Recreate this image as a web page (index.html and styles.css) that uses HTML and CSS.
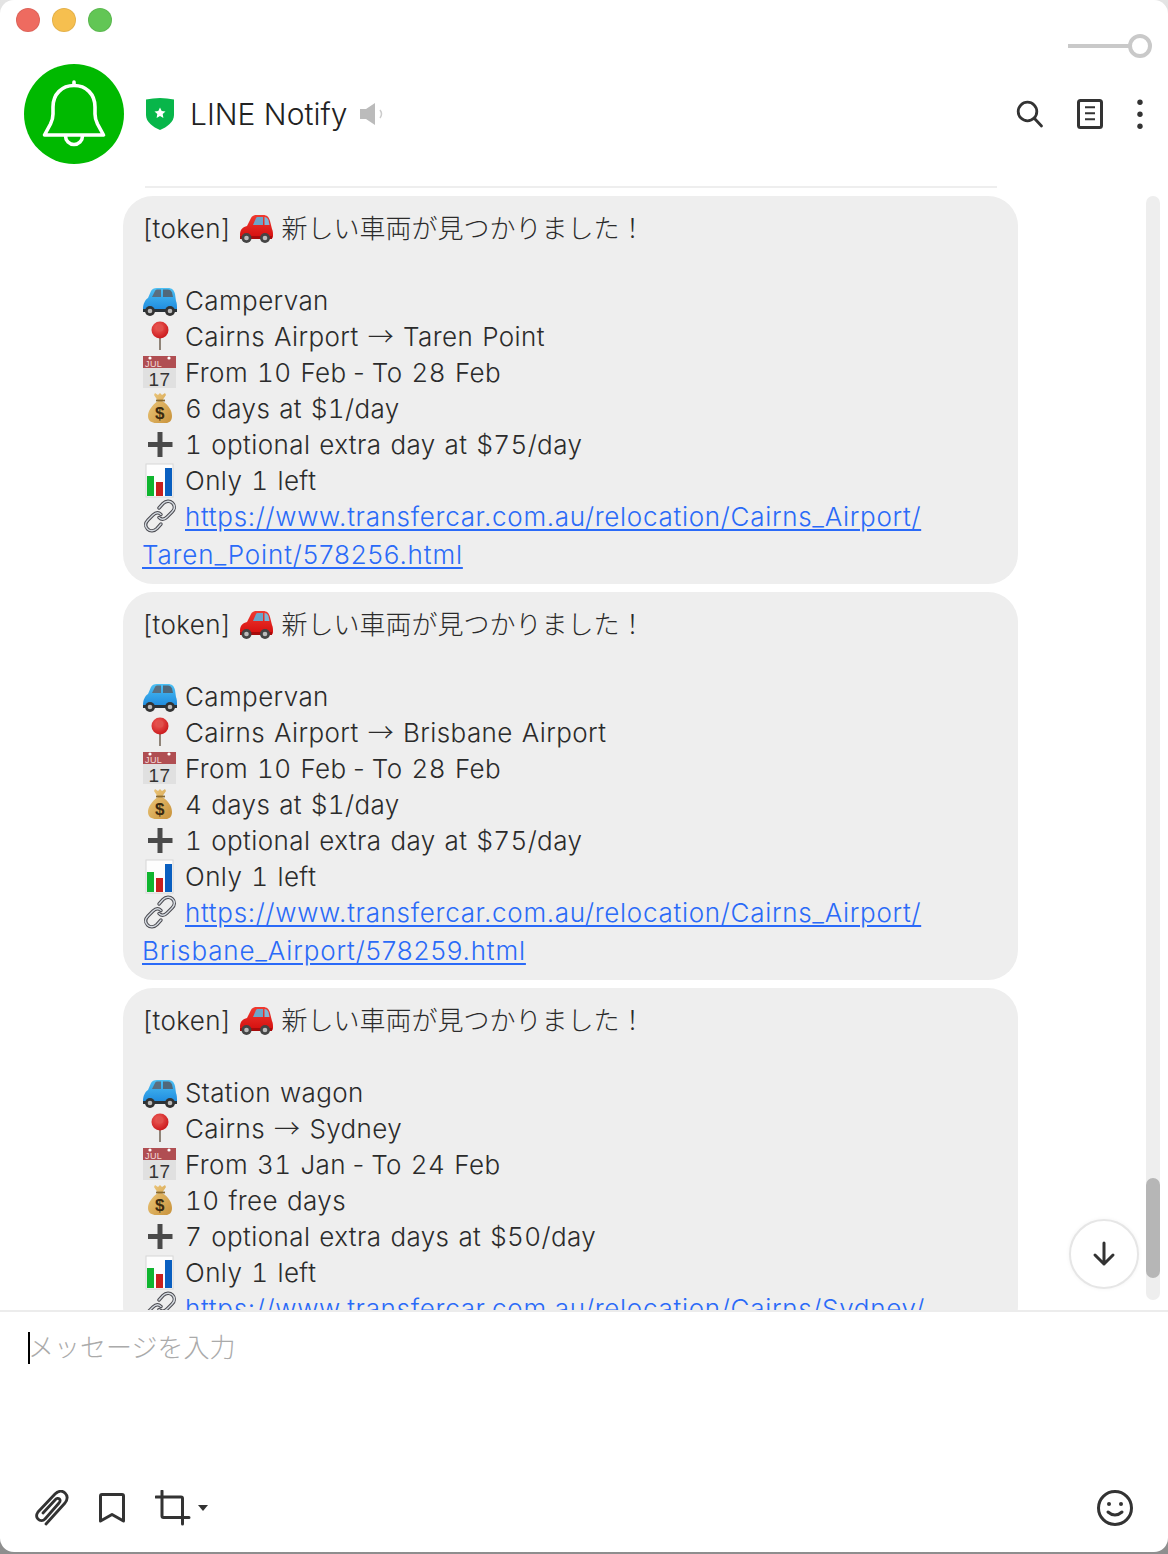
FILE: index.html
```html
<!DOCTYPE html>
<html lang="ja">
<head>
<meta charset="utf-8">
<title>LINE Notify</title>
<link rel="stylesheet" href="styles.css">
</head>
<body>
<svg class="defs" width="0" height="0" aria-hidden="true">
  <defs>
    <linearGradient id="redBody" x1="0" y1="0" x2="0" y2="1"><stop offset="0" stop-color="#f03a30"/><stop offset="1" stop-color="#d30d0d"/></linearGradient>
    <linearGradient id="blueBody" x1="0" y1="0" x2="0" y2="1"><stop offset="0" stop-color="#4cc0f4"/><stop offset="1" stop-color="#1b86dc"/></linearGradient>
    <linearGradient id="bag" x1="0" y1="0" x2="1" y2="1"><stop offset="0" stop-color="#efcb80"/><stop offset="1" stop-color="#c8923a"/></linearGradient>
    <radialGradient id="pinHead" cx=".4" cy=".35" r=".7"><stop offset="0" stop-color="#f0605a"/><stop offset="1" stop-color="#c8161a"/></radialGradient>
    <symbol id="e-red" viewBox="0 0 36 36">
      <path d="M2 25c0-6 3-8 7-9l4-8c1-2 3-3 6-3h6c4 0 6 2 7 6l2 8c1 2 1 4 1 7 0 2-1 3-3 3H4c-1 0-2-2-2-4z" fill="url(#redBody)"/>
      <path d="M15 15l3-7c.5-1 1-1 2-1h5v8z" fill="#6ba6c9"/><path d="M26.500 7c2 0 3 1 4 3l1 5h-5z" fill="#7fb6d6"/>
      <path d="M2 26h32v3H2z" fill="#a70b0b"/>
      <circle cx="8.500" cy="28" r="5" fill="#444"/><circle cx="8.500" cy="28" r="2.300" fill="#bbb"/>
      <circle cx="27" cy="28" r="5" fill="#444"/><circle cx="27" cy="28" r="2.300" fill="#bbb"/>
    </symbol>
    <symbol id="e-blue" viewBox="0 0 36 36">
      <path d="M1 27c0-5 2-9 5-11l3-7c1-2 3-3 6-3h11c4 0 6 2 7 6l1 7c1 2 1 5 1 8 0 2-1 3-3 3H3c-1 0-2-1-2-3z" fill="url(#blueBody)"/>
      <path d="M10 15l3-6c.5-1 1-1.500 3-1.500h3V15z" fill="#5a6f80"/><path d="M21 7.500h5c2 0 3 1 4 3l1 4.500H21z" fill="#50687a"/>
      <path d="M1 27h34v3H1z" fill="#2a3238"/>
      <circle cx="8" cy="29" r="5" fill="#333"/><circle cx="8" cy="29" r="2.300" fill="#bbb"/>
      <circle cx="28" cy="29" r="5" fill="#333"/><circle cx="28" cy="29" r="2.300" fill="#bbb"/>
    </symbol>
    <symbol id="e-pin" viewBox="0 0 36 36">
      <rect x="17" y="18" width="2" height="14" fill="#8f8478"/>
      <circle cx="18" cy="12" r="8.500" fill="url(#pinHead)"/>
      <circle cx="18" cy="10" r="3.500" fill="#e0504c"/>
    </symbol>
    <symbol id="e-cal" viewBox="0 0 36 36">
      <rect x="1" y="2" width="33" height="32" fill="#e0e0e0"/>
      <rect x="1" y="2" width="33" height="12" fill="#b04e52"/>
      <circle cx="8" cy="4" r="1.600" fill="#fff"/><circle cx="27" cy="4" r="1.600" fill="#fff"/>
      <text x="3" y="12.500" class="cal-month">JUL</text>
      <text x="17.500" y="31.500" class="cal-day">17</text>
    </symbol>
    <symbol id="e-bag" viewBox="0 0 36 36">
      <path d="M13 3l3 2 2-2 2 2 3-2 1 2-4 6c7 4 10 10 10 15 0 5-3 7-6 7H14c-4 0-8-2-8-7 0-5 4-11 10-15L12 5z" fill="url(#bag)"/>
      <path d="M14 10.500h9" stroke="#8a6a30" stroke-width="1.800"/>
      <text x="18" y="29" class="bag-sign">$</text>
    </symbol>
    <symbol id="e-plus" viewBox="0 0 36 36">
      <path d="M15.500 6h5v10h10v5h-10v10h-5V21H6v-5h9.500z" fill="#4a4a4a"/>
    </symbol>
    <symbol id="e-chart" viewBox="0 0 36 36">
      <rect x="4" y="2" width="27" height="33" fill="#fdfdfd" stroke="#d6d6d6"/>
      <rect x="5" y="14" width="7" height="20" fill="#0fb52f"/>
      <rect x="14" y="20" width="7" height="14" fill="#c8201e"/>
      <rect x="23" y="6" width="7" height="28" fill="#0a5fc0"/>
    </symbol>
    <symbol id="e-link" viewBox="0 0 36 36">
      <g fill="none" stroke-linecap="round">
        <path d="M17 10l4-4.500c3-3 7-3 9.500-.5s2.500 6-.5 9l-5 5c-3 3-6 2.500-8 .5" stroke="#4a4a50" stroke-width="3.400"/>
        <path d="M17 10l4-4.500c3-3 7-3 9.500-.5s2.500 6-.5 9l-5 5c-3 3-6 2.500-8 .5" stroke="#d5dae0" stroke-width="1.400"/>
        <path d="M19 26l-4 4.500c-3 3-7 3-9.500.5S3 25 6 22l5-5c3-3 6-2.500 8-.5" stroke="#4a4a50" stroke-width="3.400"/>
        <path d="M19 26l-4 4.500c-3 3-7 3-9.500.5S3 25 6 22l5-5c3-3 6-2.500 8-.5" stroke="#d5dae0" stroke-width="1.400"/>
      </g>
    </symbol>
  </defs>
</svg>

<div class="window">
  <div class="titlebar">
    <div class="lights">
      <span class="light light-red"></span>
      <span class="light light-yellow"></span>
      <span class="light light-green"></span>
    </div>
    <div class="slider"><span class="slider-track"></span><span class="slider-knob"></span></div>
  </div>

  <header class="chat-header">
    <div class="avatar">
      <svg viewBox="0 0 100 100" width="100" height="100" fill="none" stroke="#fff" stroke-width="3.600" stroke-linejoin="round" stroke-linecap="round">
        <path d="M50 18v3"/>
        <path d="M20.500 71l6-11q2.500-5 2.500-10v-7c0-13 9-21.500 21-21.500S71 30 71 43v7q0 5 2.500 10l6 11z"/>
        <path d="M41.500 72a8.500 8.500 0 0 0 17 0"/>
      </svg>
    </div>
    <svg class="shield" viewBox="0 0 28 32" width="28" height="32">
      <path d="M0 1.500Q14-1.500 28 1.500V17C28 24 21 29 14 32 7 29 0 24 0 17z" fill="#08b64a"/>
      <path d="M14 9.500l1.700 3.500 3.800.5-2.800 2.600.7 3.800-3.400-1.900-3.400 1.900.7-3.800-2.800-2.600 3.800-.5z" fill="#fff"/>
    </svg>
    <h1 class="chat-title">LINE Notify</h1>
    <svg class="mute" viewBox="0 0 24 24" width="24" height="24">
      <path d="M0 7h6l9-6v22l-9-6H0z" fill="#bbb"/>
      <path d="M20 8q3 4 0 8" fill="none" stroke="#ccc" stroke-width="1.500"/>
    </svg>
    <div class="header-actions">
      <svg viewBox="0 0 30 30" width="30" height="30" fill="none" stroke="#333" stroke-width="2.800" stroke-linecap="round">
        <circle cx="11.500" cy="12.500" r="9.300"/><path d="M18.500 19.500l7 7.500"/>
      </svg>
      <svg viewBox="0 0 30 30" width="30" height="30" fill="none" stroke="#333" stroke-width="3" stroke-linejoin="round">
        <rect x="2.500" y="1.500" width="23" height="27" rx="2"/>
        <path d="M9 8.300h10M9 14.300h10M9 20.300h10" stroke-width="2"/>
      </svg>
      <svg class="more" viewBox="0 0 8 30" width="8" height="30" fill="#333">
        <circle cx="4" cy="3.300" r="2.700"/><circle cx="4" cy="15.300" r="2.700"/><circle cx="4" cy="27.300" r="2.700"/>
      </svg>
    </div>
  </header>

  <main class="chat-body">
    <div class="messages">
      <div class="date-rule"></div>

      <article class="bubble">
        <div class="line"><span>[token]</span><svg class="emoji emoji-inline"><use href="#e-red"/></svg><span class="cjk">新しい車両が見つかりました！</span></div>
        <div class="line"></div>
        <div class="line"><svg class="emoji"><use href="#e-blue"/></svg><span>Campervan</span></div>
        <div class="line"><svg class="emoji"><use href="#e-pin"/></svg><span>Cairns Airport <span class="arrow">→</span> Taren Point</span></div>
        <div class="line"><svg class="emoji"><use href="#e-cal"/></svg><span>From 10 Feb<span class="dash"> - </span>To 28 Feb</span></div>
        <div class="line"><svg class="emoji"><use href="#e-bag"/></svg><span>6 days at $1/day</span></div>
        <div class="line"><svg class="emoji"><use href="#e-plus"/></svg><span>1 optional extra day at $75/day</span></div>
        <div class="line"><svg class="emoji"><use href="#e-chart"/></svg><span>Only 1 left</span></div>
        <div class="line"><svg class="emoji"><use href="#e-link"/></svg><a class="link" href="#">https://www.transfercar.com.au/relocation/Cairns_Airport/</a></div>
        <div class="line line-wrap"><a class="link" href="#">Taren_Point/578256.html</a></div>
      </article>

      <article class="bubble">
        <div class="line"><span>[token]</span><svg class="emoji emoji-inline"><use href="#e-red"/></svg><span class="cjk">新しい車両が見つかりました！</span></div>
        <div class="line"></div>
        <div class="line"><svg class="emoji"><use href="#e-blue"/></svg><span>Campervan</span></div>
        <div class="line"><svg class="emoji"><use href="#e-pin"/></svg><span>Cairns Airport <span class="arrow">→</span> Brisbane Airport</span></div>
        <div class="line"><svg class="emoji"><use href="#e-cal"/></svg><span>From 10 Feb<span class="dash"> - </span>To 28 Feb</span></div>
        <div class="line"><svg class="emoji"><use href="#e-bag"/></svg><span>4 days at $1/day</span></div>
        <div class="line"><svg class="emoji"><use href="#e-plus"/></svg><span>1 optional extra day at $75/day</span></div>
        <div class="line"><svg class="emoji"><use href="#e-chart"/></svg><span>Only 1 left</span></div>
        <div class="line"><svg class="emoji"><use href="#e-link"/></svg><a class="link" href="#">https://www.transfercar.com.au/relocation/Cairns_Airport/</a></div>
        <div class="line line-wrap"><a class="link" href="#">Brisbane_Airport/578259.html</a></div>
      </article>

      <article class="bubble">
        <div class="line"><span>[token]</span><svg class="emoji emoji-inline"><use href="#e-red"/></svg><span class="cjk">新しい車両が見つかりました！</span></div>
        <div class="line"></div>
        <div class="line"><svg class="emoji"><use href="#e-blue"/></svg><span>Station wagon</span></div>
        <div class="line"><svg class="emoji"><use href="#e-pin"/></svg><span>Cairns <span class="arrow">→</span> Sydney</span></div>
        <div class="line"><svg class="emoji"><use href="#e-cal"/></svg><span>From 31 Jan<span class="dash"> - </span>To 24 Feb</span></div>
        <div class="line"><svg class="emoji"><use href="#e-bag"/></svg><span>10 free days</span></div>
        <div class="line"><svg class="emoji"><use href="#e-plus"/></svg><span>7 optional extra days at $50/day</span></div>
        <div class="line"><svg class="emoji"><use href="#e-chart"/></svg><span>Only 1 left</span></div>
        <div class="line"><svg class="emoji"><use href="#e-link"/></svg><a class="link" href="#">https://www.transfercar.com.au/relocation/Cairns/Sydney/</a></div>
      </article>
    </div>

    <div class="scrollbar"><div class="scroll-spacer"></div><div class="scroll-thumb"></div></div>

    <button class="to-bottom" type="button" aria-label="down">
      <svg viewBox="0 0 24 26" width="24" height="26" fill="none" stroke="#333" stroke-width="3" stroke-linecap="round" stroke-linejoin="round">
        <path d="M12 2v21M3 14l9 9 9-9"/>
      </svg>
    </button>
  </main>

  <footer class="composer">
    <div class="input-row"><span class="caret"></span><span class="placeholder">メッセージを入力</span></div>
    <div class="toolbar">
      <svg class="tool" viewBox="0 0 34 36" width="34" height="36" fill="none" stroke="#333" stroke-width="2.800" stroke-linecap="round" stroke-linejoin="round">
        <path d="M11 34L30 13c3-4 3-7 0-10s-7-2-10 1L3 22c-2 3-2 5 0 7s5 2 7 0L24 13c1.500-2 1.500-3 .5-4s-3-1-4 .5L8 23"/>
      </svg>
      <svg class="tool tool-mark" viewBox="0 0 26 30" width="26" height="30" fill="none" stroke="#333" stroke-width="3" stroke-linejoin="round">
        <path d="M1.500 28V3q0-1.500 1.500-1.500h20q1.500 0 1.500 1.500v25L13 21.500z"/>
      </svg>
      <svg class="tool tool-crop" viewBox="0 0 36 36" width="36" height="36" fill="none" stroke="#333" stroke-width="3" stroke-linecap="round" stroke-linejoin="round">
        <path d="M7 1v25q0 1.500 1.500 1.500H34"/><path d="M1 7h25q1.500 0 1.500 1.500V34"/>
      </svg>
      <svg class="tool-caret" viewBox="0 0 10 6" width="10" height="6"><path d="M0 0h10L5 6z" fill="#333"/></svg>
      <svg class="tool-smile" viewBox="0 0 38 38" width="38" height="38" fill="none" stroke="#333" stroke-width="3" stroke-linecap="round">
        <circle cx="19" cy="19" r="16.500"/>
        <circle cx="13" cy="15" r="2" fill="#333" stroke="none"/><circle cx="25" cy="15" r="2" fill="#333" stroke="none"/>
        <path d="M12 23q7 6 14 0"/>
      </svg>
    </div>
  </footer>
</div>
</body>
</html>
```

FILE: styles.css
```css
* { box-sizing: border-box; }

html, body { margin: 0; padding: 0; }

body {
  width: 1168px;
  height: 1554px;
  overflow: hidden;
  background: linear-gradient(#e4e4e4, #8e8e8e);
  font-family: Inter, "Noto Sans CJK JP", sans-serif;
  color: #2b2b2b;
}

.defs { display: block; height: 0; }

.window {
  display: flex;
  flex-direction: column;
  width: 1168px;
  height: 1552px;
  background: #fff;
  border-radius: 14px;
  overflow: hidden;
}

/* Title bar */
.titlebar {
  display: flex;
  justify-content: space-between;
  height: 64px;
  padding: 8px 16px 0 16px;
  flex: none;
}

.lights { display: flex; gap: 12px; padding-left: 0; }

.light {
  width: 24px;
  height: 24px;
  border-radius: 50%;
  border: 1px solid rgba(0,0,0,.07);
}
.light-red { background: #ee6b60; }
.light-yellow { background: #f6bf4f; }
.light-green { background: #62c655; }

.slider { display: flex; align-items: center; height: 24px; margin-top: 26px; }
.slider-track { width: 62px; height: 4px; background: #c9c9c9; }
.slider-knob {
  width: 24px;
  height: 24px;
  margin-left: -2px;
  border: 4px solid #c9c9c9;
  border-radius: 50%;
  background: #fff;
}

/* Header */
.chat-header {
  display: flex;
  align-items: center;
  height: 100px;
  margin-bottom: 22px;
  padding: 0 24px;
  flex: none;
}

.avatar {
  width: 100px;
  height: 100px;
  border-radius: 50%;
  background: #00b900;
  flex: none;
}
.avatar svg { display: block; }

.shield { margin-left: 22px; flex: none; }

.chat-title {
  margin: 0 0 0 16px;
  font-size: 30px;
  font-weight: 300;
  line-height: 40px;
  color: #222;
}

.mute { margin-left: 13px; flex: none; }

.header-actions {
  display: flex;
  align-items: center;
  gap: 30px;
  margin-left: auto;
}

/* Chat body */
.chat-body {
  position: relative;
  display: flex;
  flex: 1;
  min-height: 0;
  overflow: hidden;
}

.messages {
  display: flex;
  flex-direction: column;
  gap: 8px;
  width: 1018px;
  padding-left: 123px;
  flex: none;
}

.date-rule {
  height: 2px;
  margin: 0 21px 0 22px;
  background: #eee;
  flex: none;
}

.bubble {
  padding: 14px 19px 10px;
  border-radius: 30px;
  background: #eee;
  flex: none;
}

.line {
  display: flex;
  align-items: center;
  height: 36px;
  font-size: 26px;
  font-weight: 300;
  line-height: 36px;
  letter-spacing: .4px;
  word-spacing: 1.6px;
  font-variant-numeric: tabular-nums;
  white-space: pre;
  color: #2b2b2b;
}
.line > span, .line > a { margin-top: 1px; }
.line > .cjk { margin-top: 2px; letter-spacing: 0; }
.line-wrap { height: 40px; line-height: 40px; }
.line-wrap .link { letter-spacing: .85px; }
.arrow { font-family: "Noto Sans CJK JP", sans-serif; line-height: 1; }
.dash { word-spacing: -3.4px; }

.emoji { width: 36px; height: 36px; margin-right: 7px; flex: none; }
.emoji-inline { margin: 0 8px 0 6px; }

.link {
  color: #2a6af8;
  letter-spacing: .7px;
  font-variant-numeric: normal;
  text-decoration: underline;
  text-underline-offset: 3px;
}

.cal-month { font: 9px "Liberation Sans", sans-serif; fill: #f4dcdc; }
.cal-day { font: 19px "Liberation Sans", sans-serif; fill: #333; text-anchor: middle; }
.bag-sign { font: bold 17px "Liberation Sans", sans-serif; fill: #3a2a10; text-anchor: middle; }

/* Scrollbar */
.scrollbar {
  display: flex;
  flex-direction: column;
  width: 14px;
  height: 1104px;
  margin: 10px 0 0 128px;
  border-radius: 7px;
  background: #eee;
  flex: none;
}
.scroll-spacer { height: 982px; flex: none; }
.scroll-thumb { height: 100px; border-radius: 7px; background: #b6b6b6; flex: none; }

.to-bottom {
  position: absolute;
  right: 29px;
  bottom: 21px;
  display: flex;
  align-items: center;
  justify-content: center;
  width: 70px;
  height: 70px;
  padding: 0;
  border: 2px solid #e6e6e6;
  border-radius: 50%;
  background: #fff;
  box-shadow: 0 0 4px rgba(0,0,0,.05);
}

/* Composer */
.composer {
  display: flex;
  flex-direction: column;
  justify-content: space-between;
  height: 242px;
  border-top: 2px solid #ececec;
  flex: none;
}

.input-row { display: flex; align-items: center; padding: 20px 0 0 28px; }
.caret { width: 2px; height: 32px; background: #000; flex: none; }
.placeholder { margin-left: -2px; font-size: 26px; font-weight: 300; line-height: 32px; color: #aaa; }

.toolbar {
  display: flex;
  align-items: center;
  height: 36px;
  margin-bottom: 26px;
  padding: 0 34px 0 35px;
}
.tool-mark { margin-left: 30px; }
.tool-crop { margin-left: 30px; }
.tool-caret { margin-left: 7px; }
.tool-smile { margin-left: auto; }
```
